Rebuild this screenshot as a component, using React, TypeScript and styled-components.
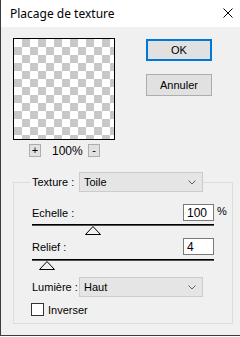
import React from 'react';
import styled, { createGlobalStyle } from 'styled-components';

const GlobalStyle = createGlobalStyle`
  html, body {
    margin: 0;
    padding: 0;
    background: #ffffff;
  }
  * {
    box-sizing: border-box;
  }
`;

// ===== WINDOW =====
const Window = styled.div`
  width: 240px;
  height: 336px;
  display: flex;
  flex-direction: column;
  border-left: 1px solid #3c3c3c;
  border-bottom: 1px solid #3c3c3c;
  background: #f0f0f0;
  font-family: 'Liberation Sans', Arial, sans-serif;
  font-size: 11px;
  color: #000;
  white-space: nowrap;
`;

const TitleBar = styled.div`
  height: 27px;
  flex-shrink: 0;
  display: flex;
  align-items: center;
  justify-content: space-between;
  padding: 0 6px 1px 9px;
  background: #ffffff;
  font-family: 'Noto Sans', 'Liberation Sans', sans-serif;
  font-size: 12px;
`;

const CloseIcon = styled.svg`
  width: 10px;
  height: 10px;
  margin-right: 1px;
`;

const Body = styled.div`
  flex: 1;
  padding: 11px 0 0 12px;
`;

// ===== TOP PART =====
const TopRow = styled.div`
  display: flex;
`;

const PreviewColumn = styled.div`
  display: flex;
  flex-direction: column;
  width: 102px;
`;

const Preview = styled.div`
  width: 102px;
  height: 102px;
  border: 1px solid #000;
  background-color: #ffffff;
  background-image:
    linear-gradient(45deg, #c8c8c8 25%, transparent 25%, transparent 75%, #c8c8c8 75%),
    linear-gradient(45deg, #c8c8c8 25%, transparent 25%, transparent 75%, #c8c8c8 75%);
  background-size: 16px 16px;
  background-position: 0 0, 8px 8px;
`;

const ZoomRow = styled.div`
  display: flex;
  align-items: center;
  height: 13px;
  margin-top: 4px;
  padding-left: 16px;
`;

const ZoomButton = styled.div`
  width: 12px;
  height: 13px;
  display: flex;
  align-items: center;
  justify-content: center;
  border: 1px solid #adadad;
  background: #e1e1e1;
  font-size: 11px;
  line-height: 1;
`;

const ZoomValue = styled.span`
  width: 36px;
  margin-left: 11px;
  font-size: 12px;
`;

const ButtonColumn = styled.div`
  display: flex;
  flex-direction: column;
  gap: 13px;
  margin: 1px 0 0 31px;
`;

const Button = styled.div<{ $default?: boolean }>`
  width: 66px;
  height: 22px;
  display: flex;
  align-items: center;
  justify-content: center;
  background: #e1e1e1;
  border: ${p => (p.$default ? '2px solid #0078d7' : '1px solid #adadad')};
  font-size: 11px;
`;

// ===== GROUP BOX =====
const GroupBox = styled.fieldset`
  width: 220px;
  margin: 15px 0 0 0;
  padding: 12px 18px 7px 18px;
  border: 1px solid #dcdcdc;
  min-width: 0;
`;

const Legend = styled.legend`
  display: flex;
  align-items: center;
  margin-left: -2px;
  padding: 0 0 0 2px;
`;

const FieldLabel = styled.span`
  width: 47px;
  flex-shrink: 0;
`;

const Select = styled.div`
  width: 124px;
  height: 20px;
  display: flex;
  align-items: center;
  justify-content: space-between;
  padding: 0 6px 0 4px;
  border: 1px solid #cccccc;
  background: #e5e5e5;
  font-size: 11px;
`;

const Chevron = styled.svg`
  width: 8px;
  height: 5px;
`;

const ValueRow = styled.div<{ $top: number }>`
  display: flex;
  align-items: center;
  justify-content: space-between;
  height: 17px;
  margin-top: ${p => p.$top}px;
`;

const InputWrap = styled.div`
  position: relative;
  display: flex;
`;

const NumberBox = styled.div`
  width: 31px;
  height: 17px;
  display: flex;
  align-items: center;
  padding-left: 3px;
  border: 1px solid #7a7a7a;
  background: #ffffff;
  font-size: 12px;
`;

const Unit = styled.span`
  position: absolute;
  left: 34px;
  top: 1px;
  font-size: 11px;
`;

const Track = styled.div<{ $top: number }>`
  height: 2px;
  margin-top: ${p => p.$top}px;
  border-top: 1px solid #000;
  border-bottom: 1px solid #505050;
`;

const Thumb = styled.svg`
  display: block;
  width: 16px;
  height: 9px;
`;

const SelectRow = styled.div`
  display: flex;
  align-items: center;
  margin-top: 7px;
`;

const CheckRow = styled.label`
  display: flex;
  align-items: center;
  gap: 4px;
  margin: 6px 0 0 -1px;
`;

const CheckBox = styled.span`
  width: 13px;
  height: 13px;
  border: 1px solid #333333;
  background: #ffffff;
`;

// ===== SMALL PIECES =====
const DropDown: React.FC<{ value: string }> = ({ value }) => (
  <Select>
    <span>{value}</span>
    <Chevron viewBox="0 0 8 5">
      <polyline points="0.5,0.5 4,4 7.5,0.5" fill="none" stroke="#606060" strokeWidth="1" />
    </Chevron>
  </Select>
);

const Slider: React.FC<{ top: number; offset: number }> = ({ top, offset }) => (
  <>
    <Track $top={top} />
    <Thumb viewBox="0 0 16 9" style={{ marginLeft: offset }}>
      <polygon points="8,0.5 15.5,8.5 0.5,8.5" fill="#f0f0f0" stroke="#000" strokeWidth="1" />
    </Thumb>
  </>
);

export default function App() {
  return (
    <>
      <GlobalStyle />
      <Window>
        <TitleBar>
          <span>Placage de texture</span>
          <CloseIcon viewBox="0 0 10 10">
            <path d="M0.5 0.5 L9.5 9.5 M9.5 0.5 L0.5 9.5" stroke="#000" strokeWidth="1" />
          </CloseIcon>
        </TitleBar>
        <Body>
          <TopRow>
            <PreviewColumn>
              <Preview />
              <ZoomRow>
                <ZoomButton>+</ZoomButton>
                <ZoomValue>100%</ZoomValue>
                <ZoomButton>-</ZoomButton>
              </ZoomRow>
            </PreviewColumn>
            <ButtonColumn>
              <Button $default>OK</Button>
              <Button>Annuler</Button>
            </ButtonColumn>
          </TopRow>

          <GroupBox>
            <Legend>
              <FieldLabel>Texture :</FieldLabel>
              <DropDown value="Toile" />
            </Legend>

            <ValueRow $top={0}>
              <span>Echelle :</span>
              <InputWrap>
                <NumberBox>100</NumberBox>
                <Unit>%</Unit>
              </InputWrap>
            </ValueRow>
            <Slider top={3} offset={53} />

            <ValueRow $top={3}>
              <span>Relief :</span>
              <NumberBox>4</NumberBox>
            </ValueRow>
            <Slider top={4} offset={7} />

            <SelectRow>
              <FieldLabel>Lumière :</FieldLabel>
              <DropDown value="Haut" />
            </SelectRow>

            <CheckRow>
              <CheckBox />
              <span>Inverser</span>
            </CheckRow>
          </GroupBox>
        </Body>
      </Window>
    </>
  );
}
